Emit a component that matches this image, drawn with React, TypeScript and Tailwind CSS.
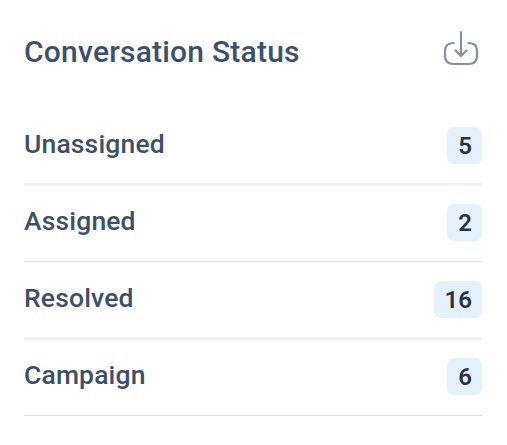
interface StatusRow {
  label: string;
  count: number;
}

const rows: StatusRow[] = [
  { label: "Unassigned", count: 5 },
  { label: "Assigned", count: 2 },
  { label: "Resolved", count: 16 },
  { label: "Campaign", count: 6 },
];

const DownloadIcon = () => (
  <svg
    width={36}
    height={36}
    viewBox="0 0 36 36"
    fill="none"
    stroke="#858fa1"
    strokeWidth={2.2}
    strokeLinecap="round"
    strokeLinejoin="round"
  >
    <path d="M18 2v24M12.500 20.500l5.500 5.500 5.500-5.500" />
    <path d="M10.500 13C5 13 2 15.500 2 21v4.500c0 5.500 3 8.500 8.500 8.500h15c5.500 0 8.500-3 8.500-8.500V21c0-5.500-3-8-8.500-8" />
  </svg>
);

const StatusItem = ({ label, count }: StatusRow) => (
  <li className="flex items-center justify-between border-solid odd:h-[78px] odd:border-b-[3px] odd:border-b-[#ebf2fa] even:h-[76px] even:border-b even:border-b-[#d3e0f4] even:pb-[2px]">
    <span className="pb-[3px] text-[26.5px] font-medium leading-8 tracking-[0.15px]">{label}</span>
    <span className="flex h-[37px] items-center rounded-[7px] bg-[#e3f1ff] pl-[11px] pr-[10px] pt-px text-[24px] font-semibold text-[#2b3340]">
      {count}
    </span>
  </li>
);

export default function App() {
  return (
    <section className="h-[445px] bg-white pl-6 pr-[25px] pt-[30px] font-['Roboto',sans-serif] text-[#3d4f69]">
      <header className="flex h-[78px] items-start justify-between pr-[3px]">
        <h2 className="text-[30px] font-medium leading-[44px] tracking-[0.22px]">Conversation Status</h2>
        <button aria-label="Download">
          <DownloadIcon />
        </button>
      </header>
      <ul>
        {rows.map((row) => (
          <StatusItem key={row.label} {...row} />
        ))}
      </ul>
    </section>
  );
}
